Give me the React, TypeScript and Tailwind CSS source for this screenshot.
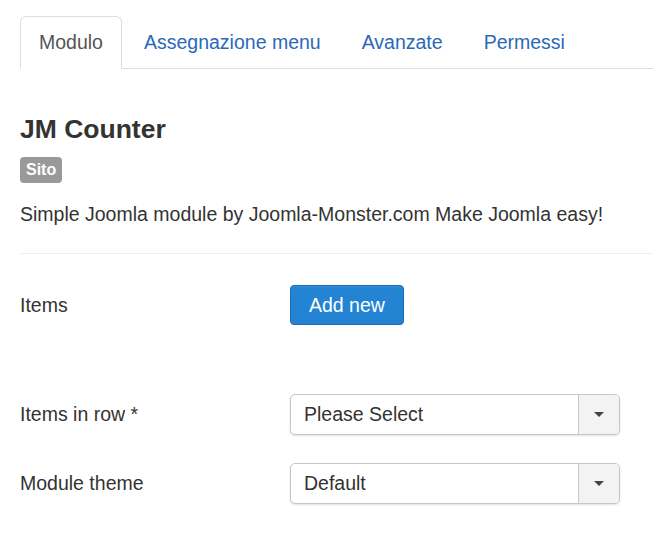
import React from "react";

const tabs = ["Modulo", "Assegnazione menu", "Avanzate", "Permessi"];

const Select: React.FC<{ value: string }> = ({ value }) => (
  <div className="flex w-[330px] h-[41px] rounded-[5px] border border-[#c7c7c7] shadow-[0_1px_2px_rgba(0,0,0,0.12)] bg-white overflow-hidden">
    <div className="flex-1 flex items-center pl-[13px] text-[#333]">{value}</div>
    <div className="w-[41px] flex items-center justify-center border-l border-[#c7c7c7] bg-[#f3f3f3]">
      <span className="block w-0 h-0 border-l-[5px] border-r-[5px] border-t-[5px] border-l-transparent border-r-transparent border-t-[#444]" />
    </div>
  </div>
);

const App: React.FC = () => {
  return (
    <div className="w-[653px] h-[543px] overflow-hidden bg-white text-[19.5px] text-[#333] font-['Liberation_Sans',Arial,sans-serif]">
      <div className="pt-4 pl-5">
        {/* Tabs */}
        <ul className="flex border-b border-[#ddd]">
          {tabs.map((t, i) =>
            i === 0 ? (
              <li
                key={t}
                className="-mb-px mr-[3px] px-[18px] py-3 leading-[27px] bg-white text-[#555] border border-[#ddd] border-b-white rounded-t-[6px]"
              >
                {t}
              </li>
            ) : (
              <li
                key={t}
                className="-mb-px mr-[3px] px-[18px] py-3 leading-[27px] text-[#2a69b8] border border-transparent"
              >
                {t}
              </li>
            )
          )}
        </ul>

        {/* Module info */}
        <h2 className="mt-[45px] text-[26.5px] leading-[30px] font-bold text-[#333]">JM Counter</h2>
        <span className="inline-block mt-[13px] px-[6px] h-[26px] leading-[26px] rounded-[4px] bg-[#999] text-white text-[16px] font-bold">
          Sito
        </span>
        <p className="mt-[18px] leading-[27px]">Simple Joomla module by Joomla-Monster.com Make Joomla easy!</p>
        <div className="mt-[25px] border-t border-[#eee]" />

        {/* Form */}
        <div className="flex items-center mt-[31px]">
          <div className="w-[270px]">Items</div>
          <button className="h-[40px] px-[18px] rounded-[4px] bg-[#2384d3] border border-[#1a6cb0] text-white shadow-[inset_0_1px_0_rgba(255,255,255,0.1)]">
            Add new
          </button>
        </div>

        <div className="flex items-center mt-[69px]">
          <div className="w-[270px]">Items in row *</div>
          <Select value="Please Select" />
        </div>

        <div className="flex items-center mt-[28px]">
          <div className="w-[270px]">Module theme</div>
          <Select value="Default" />
        </div>
      </div>
    </div>
  );
};

export default App;
